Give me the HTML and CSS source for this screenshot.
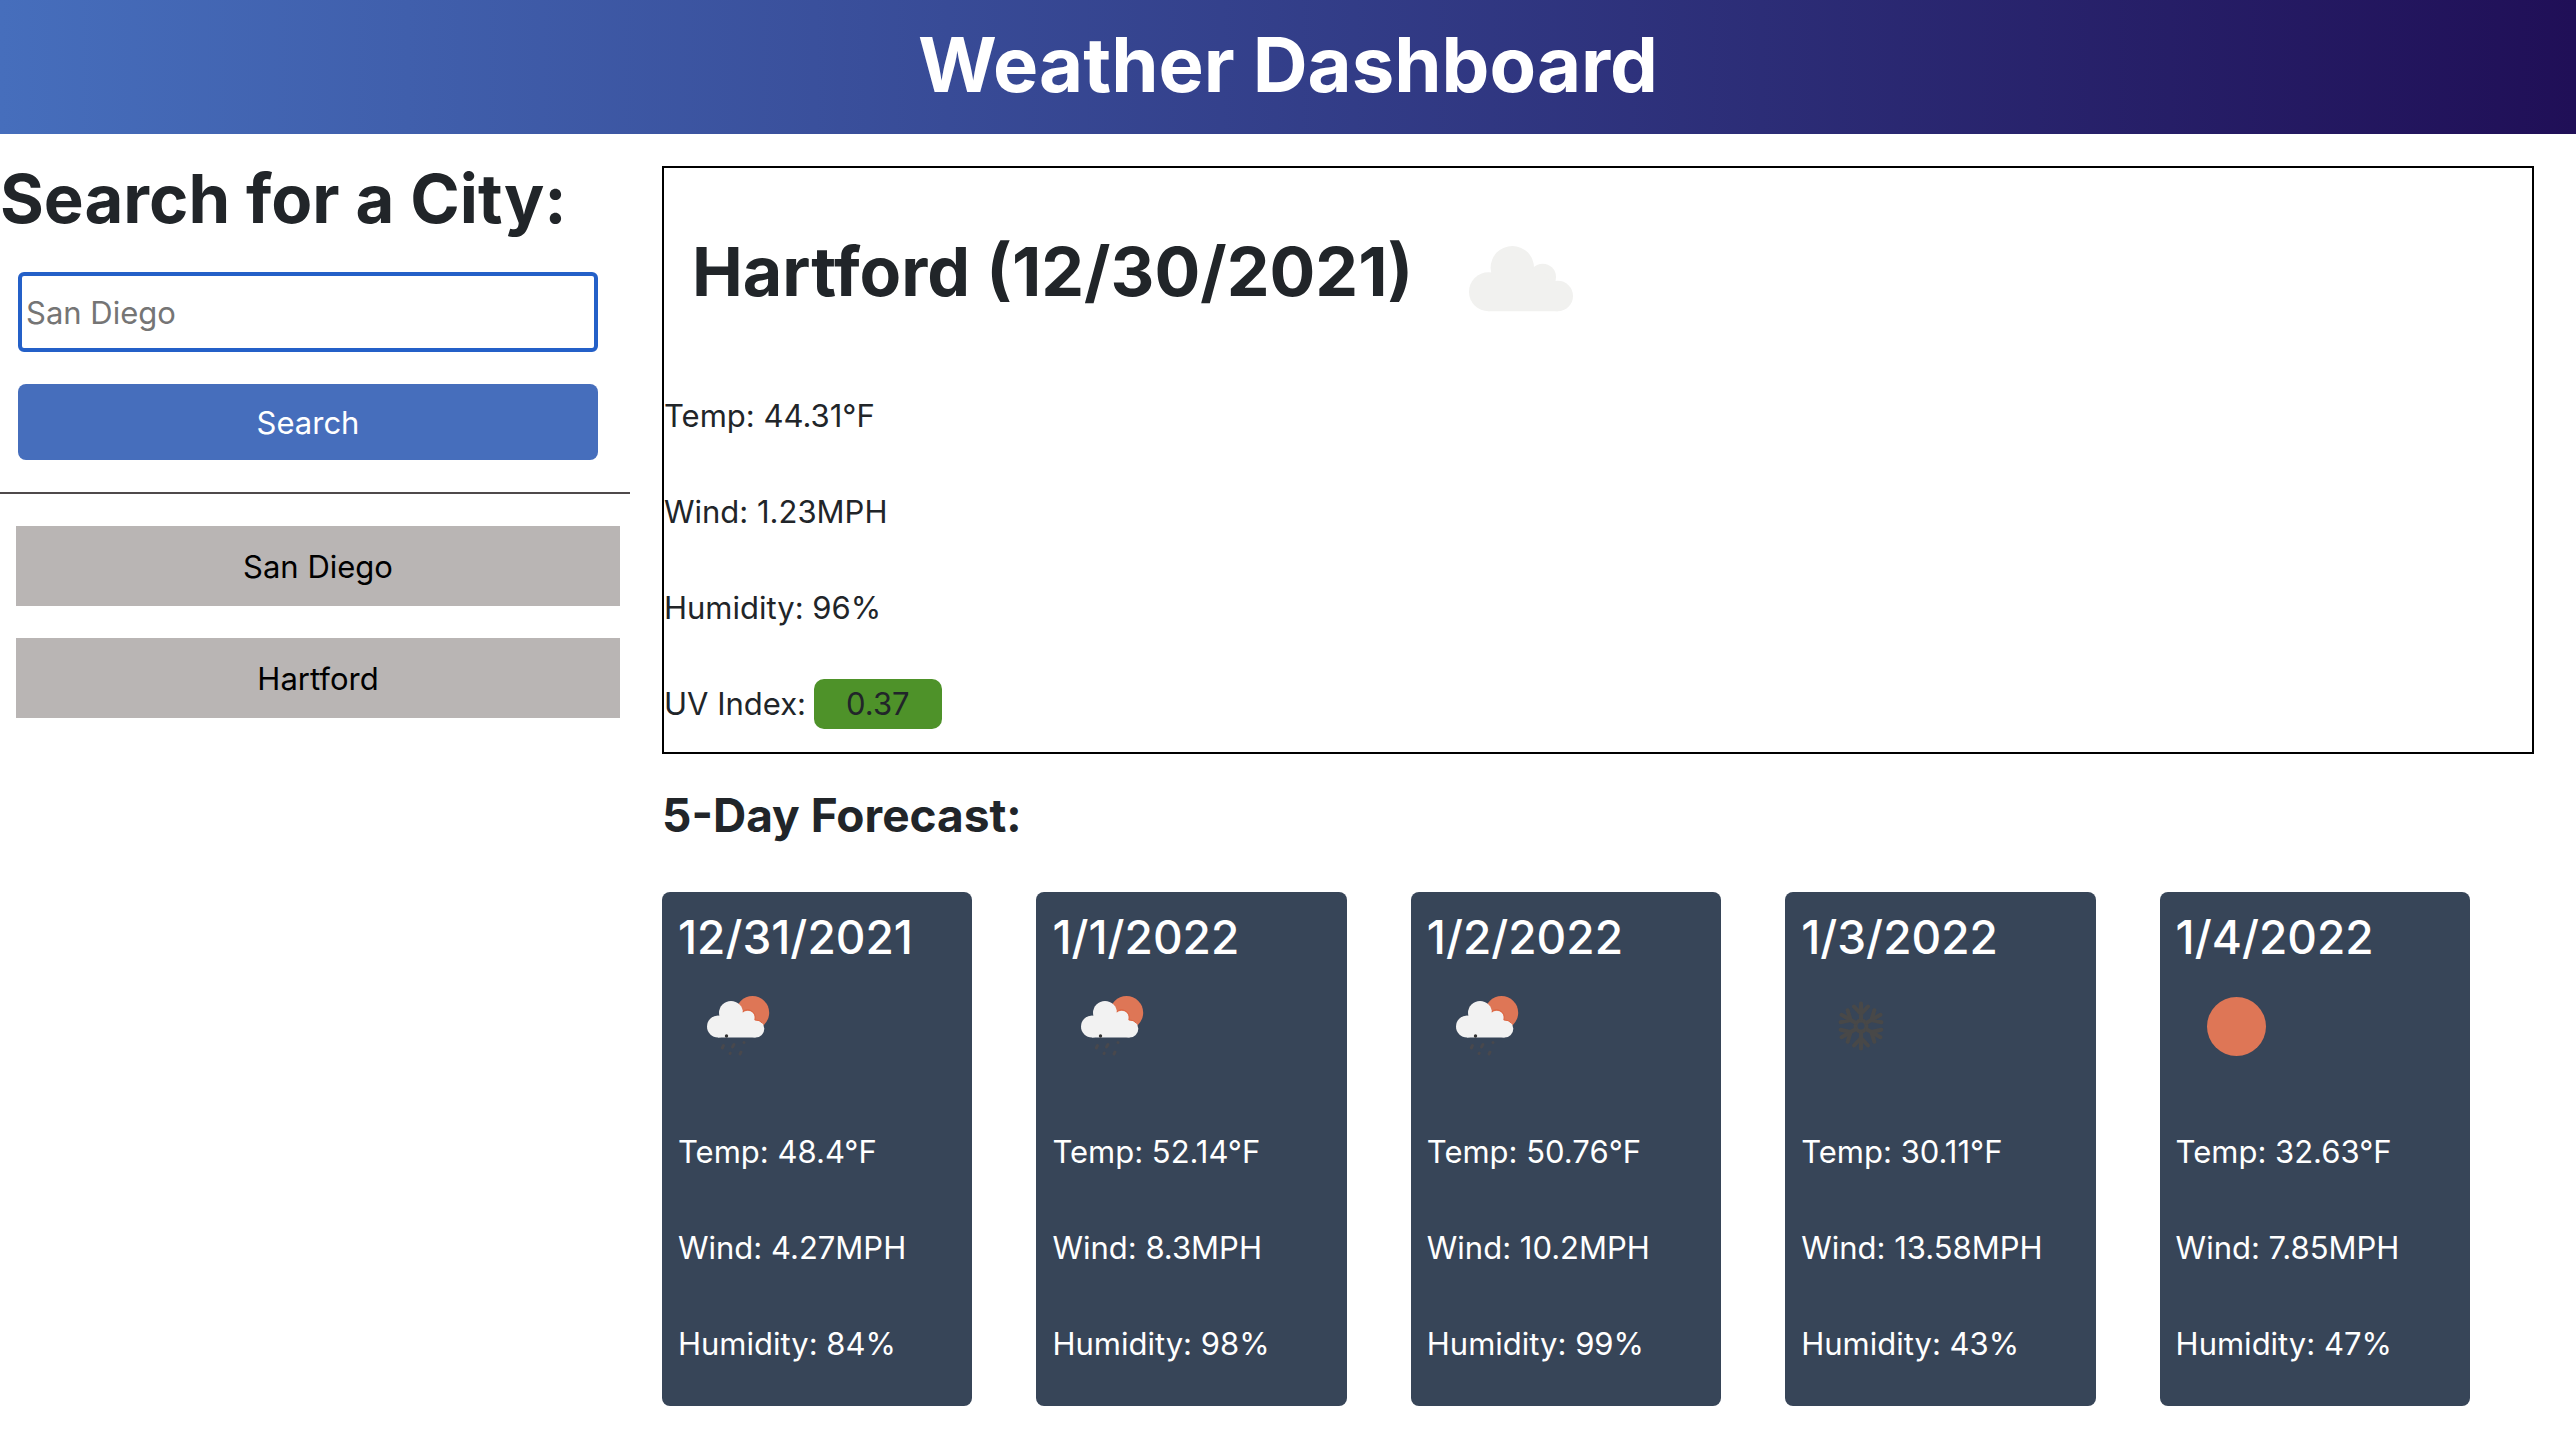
FILE: index.html
```html
<!DOCTYPE html>
<html lang="en">
<head>
<meta charset="utf-8">
<meta name="viewport" content="width=device-width, initial-scale=1">
<title>Weather Dashboard</title>
<link rel="stylesheet" href="styles.css">
</head>
<body>
<svg class="sprite" aria-hidden="true">
  <symbol id="cloud" viewBox="0 0 104 66">
    <circle cx="19.500" cy="45.700" r="19.500"/>
    <circle cx="43.300" cy="21.700" r="21.700"/>
    <circle cx="73.700" cy="31" r="13.300"/>
    <circle cx="88.700" cy="50" r="15.300"/>
    <path d="M19.500 65.200 V40 L30 26 H74 L88.700 45 V65.300 Z"/>
  </symbol>
  <symbol id="rain-sun" viewBox="0 0 120 120">
    <circle cx="74.500" cy="46.700" r="16.700" fill="#de7656"/>
    <g fill="#f2f2f2">
      <circle cx="40" cy="60.500" r="11"/>
      <circle cx="53" cy="47" r="12"/>
      <circle cx="69.700" cy="52" r="7.300"/>
      <circle cx="77.500" cy="62.700" r="8.800"/>
      <path d="M40 71.500 V58 L46 48 H70 L77.500 60 V71.500 Z"/>
    </g>
    <path d="M64.600 45.800 A7.500 7.500 0 0 1 77 52.800 V54 A8.900 8.900 0 0 1 84.500 57.200" fill="none" stroke="#dd6541" stroke-width="1"/>
    <circle cx="48.500" cy="70" r="1.700" fill="#333"/>
    <path d="M45.500 79.500 L44.300 82 M56 78.500 L54.500 81 M66 76.500 V76.600 M52.300 87.200 L52 87.600 M63 86 L62 88" fill="none" stroke="#48484d" stroke-width="3" stroke-linecap="round"/>
  </symbol>
  <symbol id="snow" viewBox="0 0 120 120">
    <g fill="none" stroke="#484848" stroke-width="4" stroke-linecap="round">
      <circle cx="60" cy="60" r="5.500"/>
      <g id="arm"><path d="M60 53 V37.500 M53 40.500 L60 48 L67 40.500"/></g>
      <use href="#arm" transform="rotate(60 60 60)"/>
      <use href="#arm" transform="rotate(120 60 60)"/>
      <use href="#arm" transform="rotate(180 60 60)"/>
      <use href="#arm" transform="rotate(240 60 60)"/>
      <use href="#arm" transform="rotate(300 60 60)"/>
    </g>
  </symbol>
  <symbol id="sun" viewBox="0 0 120 120">
    <circle cx="60.500" cy="60.500" r="29.500" fill="#de7656"/>
  </symbol>
</svg>

<header class="header">
  <h1 class="header-title">Weather Dashboard</h1>
</header>

<div class="layout">
  <aside class="sidebar">
    <form class="search">
      <label class="search-label" for="city">Search for a City:</label>
      <input class="search-input" id="city" type="text" placeholder="San Diego">
      <button class="search-button" type="submit">Search</button>
    </form>
    <div class="history">
      <button class="history-item" type="button">San Diego</button>
      <button class="history-item" type="button">Hartford</button>
    </div>
  </aside>

  <main class="main">
    <section class="current">
      <div class="current-head">
        <h2 class="current-title">Hartford (12/30/2021)</h2>
        <svg class="current-icon" role="img" aria-label="Cloudy"><use href="#cloud"/></svg>
      </div>
      <div class="stats">
        <p>Temp: 44.31°F</p>
        <p>Wind: 1.23MPH</p>
        <p>Humidity: 96%</p>
        <p class="uv">UV Index: <span class="uv-badge">0.37</span></p>
      </div>
    </section>

    <h3 class="forecast-title">5-Day Forecast:</h3>
    <section class="forecast">
      <article class="card">
        <h4 class="card-date">12/31/2021</h4>
        <svg class="card-icon" role="img" aria-label="Rain"><use href="#rain-sun"/></svg>
        <div class="stats"><p>Temp: 48.4°F</p><p>Wind: 4.27MPH</p><p>Humidity: 84%</p></div>
      </article>
      <article class="card">
        <h4 class="card-date">1/1/2022</h4>
        <svg class="card-icon" role="img" aria-label="Rain"><use href="#rain-sun"/></svg>
        <div class="stats"><p>Temp: 52.14°F</p><p>Wind: 8.3MPH</p><p>Humidity: 98%</p></div>
      </article>
      <article class="card">
        <h4 class="card-date">1/2/2022</h4>
        <svg class="card-icon" role="img" aria-label="Rain"><use href="#rain-sun"/></svg>
        <div class="stats"><p>Temp: 50.76°F</p><p>Wind: 10.2MPH</p><p>Humidity: 99%</p></div>
      </article>
      <article class="card">
        <h4 class="card-date">1/3/2022</h4>
        <svg class="card-icon" role="img" aria-label="Snow"><use href="#snow"/></svg>
        <div class="stats"><p>Temp: 30.11°F</p><p>Wind: 13.58MPH</p><p>Humidity: 43%</p></div>
      </article>
      <article class="card">
        <h4 class="card-date">1/4/2022</h4>
        <svg class="card-icon" role="img" aria-label="Clear"><use href="#sun"/></svg>
        <div class="stats"><p>Temp: 32.63°F</p><p>Wind: 7.85MPH</p><p>Humidity: 47%</p></div>
      </article>
    </section>
  </main>
</div>
</body>
</html>
```
FILE: styles.css
```css
* { box-sizing: border-box; }

body {
  margin: 0;
  background: #fff;
  color: #212529;
  font-family: Inter, "Liberation Sans", sans-serif;
  font-size: 31px;
  line-height: 48px;
}

h1, h2, h3, h4, p { margin: 0; }

.sprite { display: none; }

.header {
  padding: 16px 0 22px;
  background: linear-gradient(90deg, #466ebc, #200f57);
  color: #fff;
  text-align: center;
}

.header-title {
  font-size: 76px;
  font-weight: 700;
  line-height: 96px;
}

.layout {
  display: grid;
  grid-template-columns: minmax(0, 1fr) minmax(0, 3fr);
}

.sidebar { padding: 22px 14px 0 0; }

.search {
  display: flex;
  flex-direction: column;
  gap: 32px;
  padding: 0 32px 32px 18px;
  border-bottom: 2px solid #4f4a4b;
}

.search-label {
  margin: 0 -32px -2px -18px;
  font-size: 67px;
  font-weight: 700;
  line-height: 86px;
  white-space: nowrap;
}

.search-input,
.search-button,
.history-item {
  width: 100%;
  font: inherit;
}

.search-input {
  height: 80px;
  padding: 0 4px;
  border: 4px solid #2460c8;
  border-radius: 6px;
  background: #fff;
  color: #212529;
  outline: none;
}

.search-input::placeholder { color: #757575; opacity: 1; }

.search-button {
  height: 76px;
  padding: 2px 0 0;
  border: 0;
  border-radius: 8px;
  background: #466ebc;
  color: #fff;
}

.history {
  display: flex;
  flex-direction: column;
  gap: 32px;
  padding: 32px 10px 0 16px;
}

.history-item {
  height: 80px;
  padding: 2px 0 0;
  border: 0;
  background: #b9b5b4;
  color: #000;
}

.main { padding: 32px 42px 40px 18px; }

.current {
  padding-bottom: 24px;
  border: 2px solid #000;
}

.current-head {
  display: flex;
  align-items: center;
  gap: 56px;
  height: 224px;
  padding: 0 28px 18px;
}

.current-title {
  font-size: 68px;
  font-weight: 700;
  line-height: 86px;
}

.current-icon {
  width: 104px;
  height: 66px;
  margin-top: 16px;
  fill: #f1f1ef;
}

.stats {
  display: flex;
  flex-direction: column;
  gap: 48px;
}

.uv {
  display: flex;
  align-items: center;
  gap: 8px;
  height: 48px;
}

.uv-badge {
  padding: 1px 32px;
  border-radius: 10px;
  background: #4e9229;
}

.forecast-title {
  margin: 32px 0 48px;
  font-size: 46px;
  font-weight: 700;
  line-height: 58px;
}

.forecast {
  display: grid;
  grid-template-columns: repeat(5, minmax(0, 1fr));
  gap: 64px;
  padding-right: 64px;
}

.card {
  padding: 16px 16px 38px;
  border-radius: 8px;
  background: #374558;
  color: #fff;
}

.card-date {
  font-size: 46px;
  font-weight: 500;
  line-height: 58px;
}

.card-icon {
  display: block;
  width: 120px;
  height: 120px;
  margin-bottom: 42px;
}
```
